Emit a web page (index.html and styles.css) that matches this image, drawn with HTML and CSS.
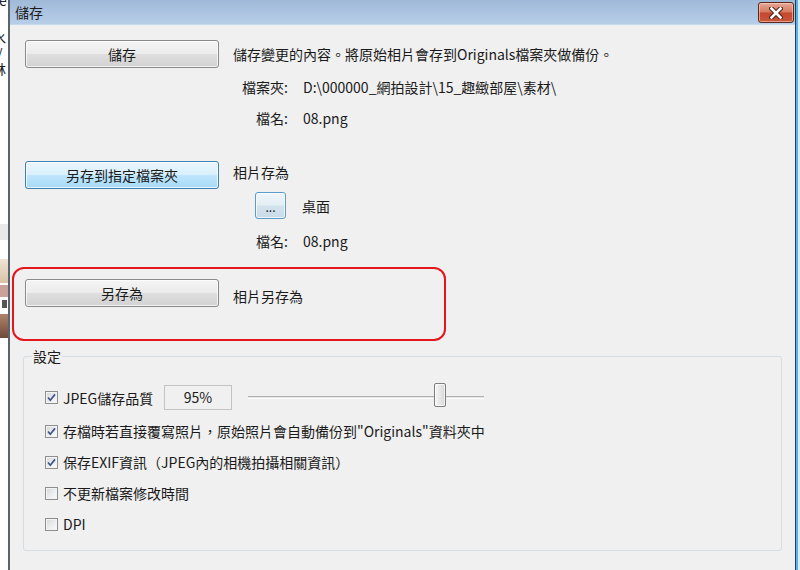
FILE: index.html
```html
<!DOCTYPE html>
<html lang="zh-Hant">
<head>
<meta charset="utf-8">
<title>儲存</title>
<link rel="stylesheet" href="styles.css">
</head>
<body>
<div class="screen">
  <div class="desk-left">
    <span class="frag frag-e">e</span>
    <span class="frag frag-k">水</span>
    <span class="frag frag-s">/</span>
    <span class="frag frag-l">林</span>
    <div class="strip strip-grey"></div>
    <div class="strip strip-photo1"></div>
    <div class="strip strip-photo2"></div>
    <div class="strip strip-icon"></div>
    <div class="strip strip-photo3"></div>
  </div>

  <div class="window">
    <div class="titlebar">
      <span class="title">儲存</span>
      <button class="close" aria-label="close">
        <svg width="14" height="12" viewBox="0 0 14 12"><path d="M2.5 1.5 L11.5 10.5 M11.5 1.5 L2.5 10.5" stroke="#4a1e16" stroke-width="4.6" stroke-linecap="square" fill="none"/><path d="M2.5 1.5 L11.5 10.5 M11.5 1.5 L2.5 10.5" stroke="#ffffff" stroke-width="2.6" stroke-linecap="square" fill="none"/></svg>
      </button>
    </div>

    <div class="body">
      <section class="sec">
        <button class="btn">儲存</button>
        <div class="info">
          <p class="desc">儲存變更的內容。將原始相片會存到Originals檔案夾做備份。</p>
          <div class="kv kv-folder"><span class="k">檔案夾:</span><span class="v">D:\000000_網拍設計\15_趣緻部屋\素材\</span></div>
          <div class="kv kv-name"><span class="k">檔名:</span><span class="v">08.png</span></div>
        </div>
      </section>

      <section class="sec sec-to">
        <button class="btn btn-hot">另存到指定檔案夾</button>
        <div class="info">
          <p class="line line-to">相片存為</p>
          <div class="browse"><button class="btn-dots">...</button><span class="place">桌面</span></div>
          <div class="kv kv-name2"><span class="k">檔名:</span><span class="v">08.png</span></div>
        </div>
      </section>

      <section class="sec sec-as">
        <button class="btn">另存為</button>
        <p class="line as-text">相片另存為</p>
      </section>

      <fieldset class="settings">
        <legend>設定</legend>
        <div class="opts">
          <div class="opt opt-q">
            <label class="chk"><span class="box"><svg width="11" height="11" viewBox="0 0 11 11"><path d="M2 5.5 L4.3 8.2 L9 2.4" stroke="#3d5488" stroke-width="1.7" fill="none"/></svg></span>JPEG儲存品質</label>
            <span class="qbox">95%</span>
            <div class="slider"><div class="track"></div><div class="thumb" style="left:186px"></div></div>
          </div>
          <div class="opt">
            <label class="chk"><span class="box"><svg width="11" height="11" viewBox="0 0 11 11"><path d="M2 5.5 L4.3 8.2 L9 2.4" stroke="#3d5488" stroke-width="1.7" fill="none"/></svg></span>存檔時若直接覆寫照片，原始照片會自動備份到"Originals"資料夾中</label>
          </div>
          <div class="opt">
            <label class="chk"><span class="box"><svg width="11" height="11" viewBox="0 0 11 11"><path d="M2 5.5 L4.3 8.2 L9 2.4" stroke="#3d5488" stroke-width="1.7" fill="none"/></svg></span>保存EXIF資訊（JPEG內的相機拍攝相關資訊）</label>
          </div>
          <div class="opt">
            <label class="chk"><span class="box"></span>不更新檔案修改時間</label>
          </div>
          <div class="opt">
            <label class="chk"><span class="box"></span>DPI</label>
          </div>
        </div>
      </fieldset>
    </div>
  </div>

  <div class="desk-right"></div>
</div>
</body>
</html>
```

FILE: styles.css
```css
* { box-sizing: border-box; }
html, body { margin: 0; padding: 0; }
body {
  width: 800px;
  height: 570px;
  overflow: hidden;
  background: #ffffff;
  font-family: "Noto Sans CJK TC", "Noto Sans CJK SC", sans-serif;
  font-size: 14px;
  color: #1a1a1a;
}
p { margin: 0; }
button { font-family: inherit; font-size: 14px; color: #1a1a1a; padding: 0; cursor: default; }

.screen { display: flex; height: 570px; }

/* desktop behind the dialog */
.desk-left {
  width: 8px;
  flex: none;
  background: #ffffff;
  overflow: hidden;
  display: flex;
  flex-direction: column;
}
.frag { display: block; white-space: nowrap; font-size: 14px; line-height: 14px; height: 14px; overflow: hidden; color: #222; }
.frag-e { margin: -4px 0 0 -1px; height: 10px; line-height: 8px; }
.frag-k { margin: 24px 0 0 -8px; }
.frag-s { margin: 4px 0 0 -3px; height: 10px; line-height: 10px; }
.frag-l { margin: 4px 0 0 -8px; }
.strip { flex: none; }
.strip-grey { height: 16px; margin-top: 148px; background: #e9e9e9; }
.strip-photo1 { height: 24px; margin-top: 19px; background: linear-gradient(#efe3d3, #d9c3a8); }
.strip-photo2 { height: 12px; margin-top: 2px; background: #c9a39a; }
.strip-icon { height: 8px; margin-top: 3px; background: linear-gradient(to right, #fff 0 2px, #555 2px 7px, #fff 7px); }
.strip-photo3 { height: 24px; margin-top: 6px; background: linear-gradient(#b0836a, #6e4a3a); }

.desk-right {
  flex: 1;
  background: linear-gradient(to right, #55b3ec 0 2px, #d8ecf8 2px);
}

/* window */
.window {
  width: 788px;
  flex: none;
  border-left: 2px solid #5b636d;
  border-right: 1px solid #2f3b48;
  background: #f0f0f0;
  display: flex;
  flex-direction: column;
}
.titlebar {
  height: 25px;
  flex: none;
  display: flex;
  justify-content: space-between;
  align-items: flex-start;
  background: linear-gradient(#9fb9d8, #b7cee8);
  border-bottom: 1px solid #c6d8ec;
}
.title { padding: 4px 0 0 5px; line-height: 17px; color: #1c1c1c; }
.close {
  width: 36px;
  height: 21px;
  margin: 2px 1px 0 0;
  border: 1px solid #5e271c;
  border-radius: 3px;
  background: linear-gradient(#e7a996 0%, #d67a62 45%, #c4482e 55%, #c9563a 100%);
  box-shadow: inset 0 0 0 1px rgba(255, 220, 210, 0.55);
  display: flex;
  align-items: center;
  justify-content: center;
}

.body { padding: 15px 0 0 2px; }

.sec {
  margin-left: 13px;
  display: grid;
  grid-template-columns: 194px 1fr;
  column-gap: 14px;
  align-items: start;
}
.btn {
  width: 194px;
  height: 28px;
  border: 1px solid #8a8a8a;
  border-radius: 3px;
  background: linear-gradient(#f4f4f4 0%, #ececec 48%, #dedede 52%, #d2d2d2 100%);
  box-shadow: inset 0 0 0 1px rgba(255, 255, 255, 0.75);
  line-height: 1;
}
.btn-hot {
  border-color: #3c7fb1;
  background: linear-gradient(#eaf6fd 0%, #d9f0fc 48%, #bee6fd 52%, #a7d9f5 100%);
}
.desc { line-height: 28px; }
.kv { display: flex; line-height: 20px; }
.kv .k { width: 55px; text-align: right; flex: none; }
.kv .v { margin-left: 15px; white-space: nowrap; }
.kv-folder { margin-top: 9px; }
.kv-name { margin-top: 11px; }

.sec-to { margin-top: 33px; }
.line { line-height: 20px; }
.line-to { margin-top: 1px; }
.browse { display: flex; align-items: center; margin: 10px 0 0 22px; }
.btn-dots {
  width: 31px;
  height: 27px;
  border: 1px solid #5a9ccc;
  border-radius: 3px;
  background: linear-gradient(#f0f6fa 0%, #e3eef5 48%, #d3e3ee 52%, #c8dbe8 100%);
  box-shadow: inset 0 0 0 1px rgba(255, 255, 255, 0.7);
  font-size: 12px;
  line-height: 1;
  padding-top: 3px;
}
.place { margin-left: 16px; line-height: 20px; }
.kv-name2 { margin-top: 12px; }

.sec-as {
  margin: 16px 0 0 0;
  width: 434px;
  height: 74px;
  border: 2px solid #e4161c;
  border-radius: 12px;
  padding: 10px 0 0 11px;
}
.as-text { line-height: 20px; margin-top: 7px; }

/* settings group */
.settings {
  margin: 7px 0 0 11px;
  width: 759px;
  border: 1px solid #d5dde3;
  border-radius: 3px;
  padding: 21px 0 16px 8px;
  min-inline-size: 0;
}
.settings legend { padding: 0 1px; line-height: 16px; }
.opts { padding-left: 13px; display: flex; flex-direction: column; gap: 11px; }
.opt { display: flex; align-items: center; line-height: 20px; height: 20px; }
.opt-q { height: 25px; }
.chk { display: flex; align-items: center; white-space: nowrap; }
.opt-q .chk { width: 119px; }
.box {
  width: 13px;
  height: 13px;
  flex: none;
  margin-right: 5px;
  border: 1px solid #8e8f8f;
  background: linear-gradient(135deg, #d4d6da 0%, #eeeff1 60%, #fafafa 100%);
  box-shadow: inset 0 0 0 1px #f3f3f3;
  display: flex;
  align-items: center;
  justify-content: center;
}
.qbox {
  width: 68px;
  height: 25px;
  border: 1px solid #c3c3c3;
  background: #f0f0f0;
  text-align: center;
  line-height: 23px;
}
.slider { position: relative; width: 236px; height: 25px; margin-left: 16px; }
.track {
  margin-top: 11px;
  height: 3px;
  border-top: 1px solid #b3b3b3;
  border-bottom: 1px solid #ffffff;
  background: #e3e3e3;
}
.thumb {
  position: absolute;
  top: -2px;
  width: 12px;
  height: 24px;
  border: 1px solid #7d7d7d;
  border-radius: 2px;
  background: linear-gradient(to right, #f6f6f6, #e4e4e4 60%, #d6d6d6);
  box-shadow: inset 0 0 0 1px rgba(255, 255, 255, 0.7);
}
```
